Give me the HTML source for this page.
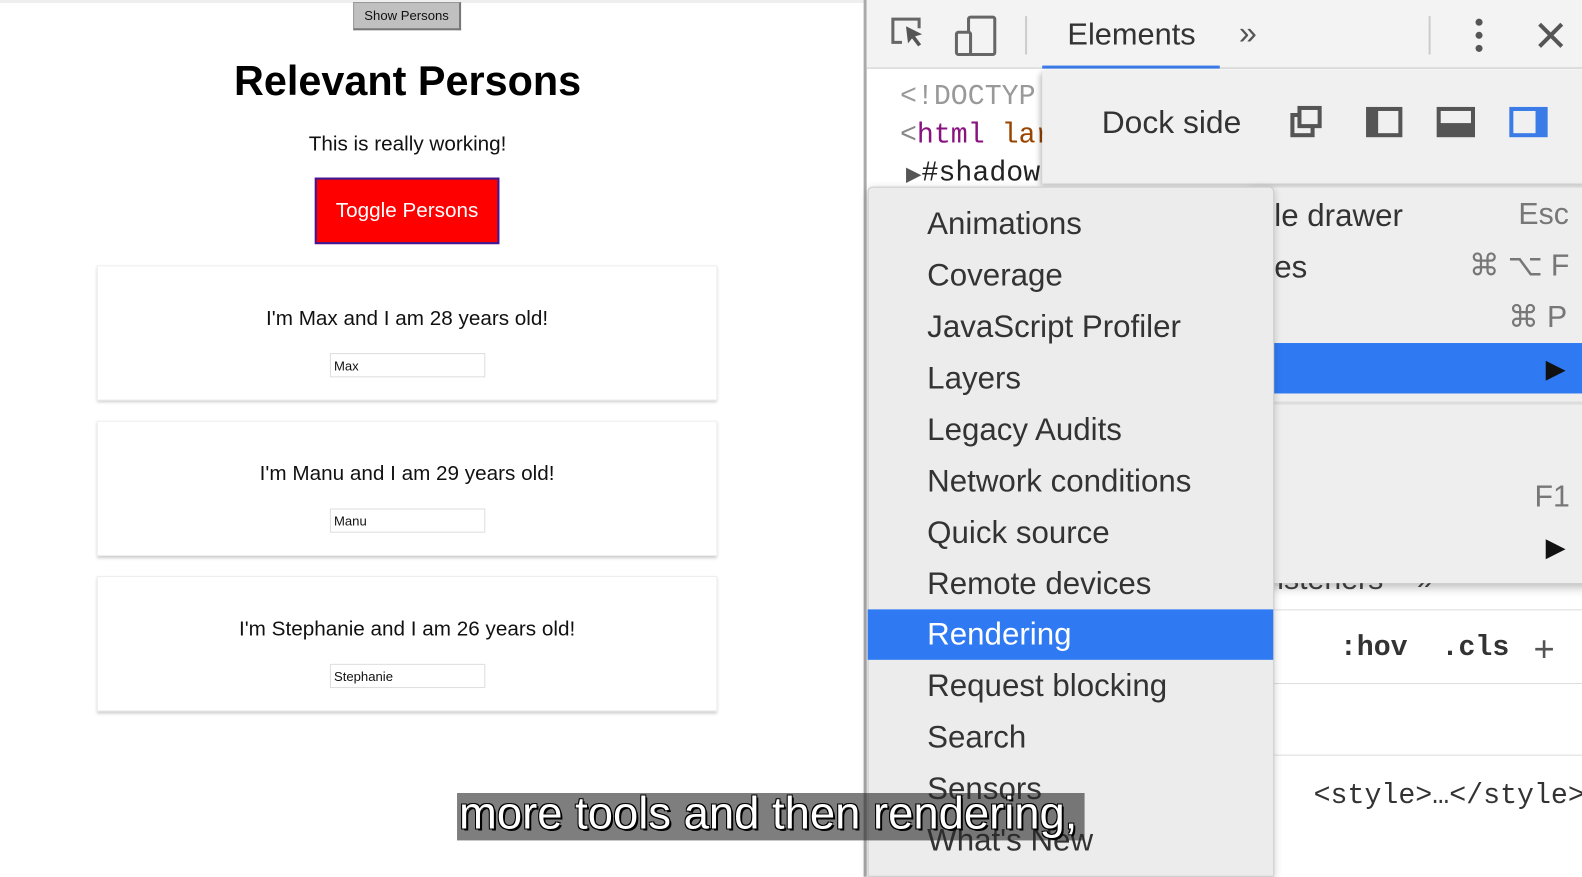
<!DOCTYPE html>
<html><head><style>
*{margin:0;padding:0;box-sizing:border-box}
body{width:1582px;height:869px;overflow:hidden;background:#fff;font-family:"Liberation Sans",Arial,sans-serif;position:relative}
#w{position:absolute;left:0;top:0;width:1568px;height:861px;transform:scale(1.0089);transform-origin:0 0}
.abs{position:absolute;white-space:nowrap}
.card{position:absolute;left:96px;width:615px;height:134px;background:#fff;border:1px solid #eee;box-shadow:0 2px 3px #ccc;text-align:center}
.card p{position:absolute;top:40px;width:100%;font-size:20.5px;color:#111}
.card .in{position:absolute;left:230px;top:86px;width:154px;height:24px;border:1px solid #ddd;font-size:13px;text-align:left;padding:4px 3px;color:#111}
.mi{position:absolute;left:919px;font-size:31px;color:#333;white-space:nowrap}
.mono{font-family:"Liberation Mono",monospace}
</style></head><body><div id="w">
<div class="abs" style="left:0;top:0;width:856px;height:3px;background:#eee"></div>
<div class="abs" style="left:350px;top:2px;width:107px;height:28px;background:#c0c0c0;border:1px solid #999;border-right:2px solid #777;border-bottom:2px solid #777;font-size:13px;text-align:center;line-height:25px;color:#111">Show Persons</div>
<div class="abs" style="left:0;width:808px;top:57px;text-align:center;font-size:41px;font-weight:bold;color:#000">Relevant Persons</div>
<div class="abs" style="left:0;width:808px;top:131px;text-align:center;font-size:20.5px;color:#111">This is really working!</div>
<div class="abs" style="left:312px;top:176px;width:183px;height:66px;background:#f00;border:2px solid #3a1a9a;color:#fff;font-size:20.5px;text-align:center;line-height:62px">Toggle Persons</div>
<div class="card" style="top:263px"><p>I'm Max and I am 28 years old!</p><div class="in">Max</div></div>
<div class="card" style="top:417px"><p>I'm Manu and I am 29 years old!</p><div class="in">Manu</div></div>
<div class="card" style="top:571px"><p>I'm Stephanie and I am 26 years old!</p><div class="in">Stephanie</div></div>

<div class="abs" style="left:856px;top:0;width:726px;height:869px;background:#fff;border-left:3px solid #aaa"></div>
<div class="abs" style="left:859px;top:0;width:723px;height:68px;background:#f3f3f3;border-bottom:1px solid #ccc"></div>
<svg class="abs" style="left:880px;top:14px" width="110" height="44" viewBox="0 0 110 44">
<path d="M14 28H5V5h26v9" fill="none" stroke="#666" stroke-width="3"/>
<path d="M18 12l16 8-7 2 6 8-3 2-6-8-4 5z" fill="#555"/>
<rect x="80" y="3" width="26" height="37" rx="2" fill="none" stroke="#666" stroke-width="3"/>
<rect x="68" y="18" width="14" height="22" rx="2" fill="#f3f3f3" stroke="#666" stroke-width="3"/>
</svg>
<div class="abs" style="left:1016px;top:16px;width:2px;height:38px;background:#ccc"></div>
<div class="abs" style="left:1058px;top:17px;font-size:30.5px;color:#333">Elements</div>
<div class="abs" style="left:1033px;top:65px;width:176px;height:3px;background:#3b7be8"></div>
<div class="abs" style="left:1228px;top:14px;font-size:32px;color:#555">»</div>
<div class="abs" style="left:1416px;top:16px;width:2px;height:38px;background:#ccc"></div>
<svg class="abs" style="left:1456px;top:18px" width="100" height="36"><circle cx="10" cy="4" r="3.5" fill="#555"/><circle cx="10" cy="17" r="3.5" fill="#555"/><circle cx="10" cy="30" r="3.5" fill="#555"/><path d="M70 6l22 22M92 6L70 28" stroke="#555" stroke-width="4"/></svg>

<div class="abs mono" style="left:892px;top:78px;font-size:28px;line-height:38px;color:#999">&lt;!DOCTYP</div>
<div class="abs mono" style="left:892px;top:116px;font-size:28px;line-height:38px;color:#881280"><span style="color:#888">&lt;</span>html <span style="color:#994500">lar</span></div>
<div class="abs mono" style="left:898px;top:154px;font-size:28px;line-height:38px;color:#222"><span style="font-size:20px;color:#555">▶</span>#shadow</div>

<div class="abs" style="left:1033px;top:70px;width:549px;height:112px;background:#f0f0f0;box-shadow:-2px 2px 6px rgba(0,0,0,.25);border-radius:4px 0 0 0"></div>
<div class="abs" style="left:1092px;top:103px;font-size:31.5px;color:#333">Dock side</div>
<svg class="abs" style="left:1278px;top:104px" width="260" height="34">
<rect x="3" y="10" width="20" height="20" fill="none" stroke="#555" stroke-width="4"/><rect x="10" y="3" width="20" height="18" fill="#f0f0f0" stroke="#555" stroke-width="4"/>
<rect x="78" y="4" width="32" height="26" fill="none" stroke="#555" stroke-width="4"/><rect x="78" y="4" width="10" height="26" fill="#555"/>
<rect x="148" y="4" width="34" height="26" fill="none" stroke="#555" stroke-width="4"/><rect x="148" y="18" width="34" height="12" fill="#555"/>
<rect x="220" y="4" width="34" height="26" fill="none" stroke="#3b7be8" stroke-width="4"/><rect x="244" y="4" width="10" height="26" fill="#3b7be8"/>
</svg>

<div class="abs" style="left:1263px;top:604px;width:319px;height:1px;background:#ddd"></div>
<div class="abs mono" style="left:1328px;top:627px;font-size:28px;font-weight:bold;color:#333">:hov&nbsp;&nbsp;.cls</div>
<div class="abs" style="left:1520px;top:622px;font-size:36px;color:#555">+</div>
<div class="abs" style="left:1263px;top:677px;width:319px;height:1px;background:#ddd"></div>
<div class="abs" style="left:1263px;top:748px;width:319px;height:1px;background:#ddd"></div>
<div class="abs mono" style="left:1302px;top:774px;font-size:28px;color:#333">&lt;style&gt;…&lt;/style&gt;</div>
<div class="abs" style="left:1266px;top:558px;font-size:30px;color:#444">isteners&nbsp;&nbsp;&nbsp;&nbsp;»</div>

<div class="abs" style="left:1240px;top:186px;width:342px;height:392px;background:#eeeeee;box-shadow:0 4px 10px rgba(0,0,0,.3)"></div>
<div class="abs" style="left:1263px;top:196px;font-size:31px;color:#333">le drawer</div>
<div class="abs" style="left:1505px;top:196px;font-size:30px;color:#777">Esc</div>
<div class="abs" style="left:1263px;top:247px;font-size:31px;color:#333">es</div>
<div class="abs" style="left:1456px;top:246px;font-size:30px;color:#777">⌘ ⌥ F</div>
<div class="abs" style="left:1495px;top:297px;font-size:30px;color:#777">⌘ P</div>
<div class="abs" style="left:1240px;top:340px;width:342px;height:50px;background:#2f7af2"></div>
<div class="abs" style="left:1532px;top:350px;font-size:26px;color:#111">▶</div>
<div class="abs" style="left:1240px;top:398px;width:342px;height:3px;background:#ddd"></div>
<div class="abs" style="left:1521px;top:476px;font-size:30px;color:#777">F1</div>
<div class="abs" style="left:1532px;top:527px;font-size:26px;color:#111">▶</div>

<div class="abs" style="left:860px;top:185px;width:403px;height:684px;background:#ececec;border:1px solid #ccc;border-radius:5px 5px 0 0;box-shadow:0 2px 8px rgba(0,0,0,.2)"></div>
<div class="abs" style="left:860px;top:604px;width:402px;height:50px;background:#2f7af2"></div>
<div class="mi" style="top:204px">Animations</div>
<div class="mi" style="top:255px">Coverage</div>
<div class="mi" style="top:306px">JavaScript Profiler</div>
<div class="mi" style="top:357px">Layers</div>
<div class="mi" style="top:408px">Legacy Audits</div>
<div class="mi" style="top:459px">Network conditions</div>
<div class="mi" style="top:510px">Quick source</div>
<div class="mi" style="top:561px">Remote devices</div>
<div class="mi" style="top:611px;color:#fff">Rendering</div>
<div class="mi" style="top:662px">Request blocking</div>
<div class="mi" style="top:713px">Search</div>
<div class="mi" style="top:764px">Sensors</div>
<div class="mi" style="top:815px">What's New</div>

<div class="abs" style="left:453px;top:786px;width:622px;height:47px;background:rgba(40,40,40,.6)"></div>
<div class="abs" style="left:455px;top:780px;font-size:45px;color:#fff;text-shadow:-1px -1px 0 #000,1px -1px 0 #000,-1px 1px 0 #000,2px 2px 0 #000">more tools and then rendering,</div>
</div></body></html>
